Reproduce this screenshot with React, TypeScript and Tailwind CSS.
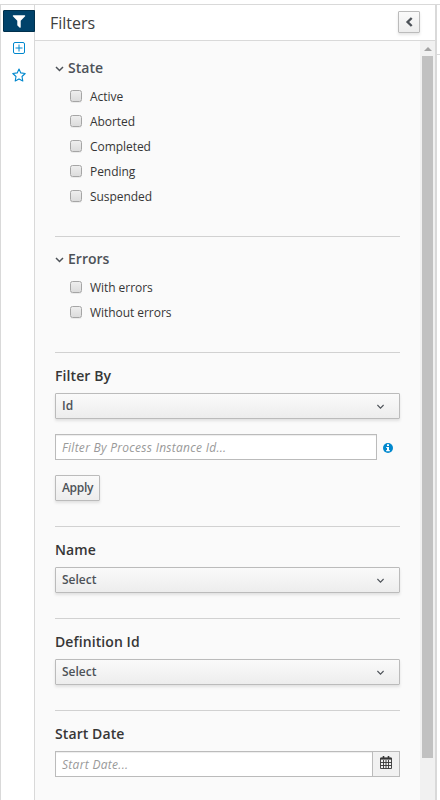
import React from "react";

const raised =
  "border border-[#bbb] rounded-[1px] bg-gradient-to-b from-[#fafafa] to-[#ededed] shadow-[0_2px_3px_rgba(3,3,3,0.1)] text-[#4d5258] font-semibold";

function Chevron() {
  return (
    <svg width="9" height="6" viewBox="0 0 9 6" fill="none" stroke="currentColor" strokeWidth="1.5">
      <path d="M1 1l3.500 3.500L8 1" />
    </svg>
  );
}

function Group({ title, items }: { title: string; items: string[] }) {
  return (
    <section>
      <h3 className="flex h-5 items-center text-sm font-semibold tracking-[0.02px] text-[#4d5258]">
        <span className="flex w-[13px] pt-px"><Chevron /></span>
        {title}
      </h3>
      <div className="pt-[6px] pl-[15px]">
        {items.map((item) => (
          <label key={item} className="flex h-[25px] items-center tracking-[-0.05px] text-[#363636]">
            <span className="mr-2 mb-[2px] h-3 w-3 rounded-[2.5px] border border-[#a5a5a5] bg-gradient-to-b from-[#eee] to-[#dcdcdc] shadow-[0_1px_0_rgba(0,0,0,0.06)]" />
            {item}
          </label>
        ))}
      </div>
    </section>
  );
}

function Label({ children }: { children: React.ReactNode }) {
  return <h3 className="h-5 text-sm leading-5 font-semibold tracking-[0.09px] text-[#363636]">{children}</h3>;
}

function Picker({ value }: { value: string }) {
  return (
    <button className={`mt-[7px] flex h-[26px] w-full items-center justify-between pr-[14px] pl-[6px] ${raised}`}>
      <span className="-mt-px">{value}</span>
      <svg className="mt-[2px]" width="9" height="6" viewBox="0 0 9 6" fill="none" stroke="currentColor" strokeWidth="1.1">
        <path d="M1.400 1l3.100 3.100L7.600 1" />
      </svg>
    </button>
  );
}

function Divider() {
  return <div className="h-px bg-[#d1d1d1]" />;
}

export default function App() {
  return (
    <div className="flex h-[800px] w-[440px] flex-col overflow-hidden bg-white pt-1 font-['Open_Sans','Noto_Sans',sans-serif] text-xs">
      <div className="flex min-h-0 flex-1 border-t border-[#d9d9d9]">
        <nav className="flex w-[35px] flex-col border-x border-[#d9d9d9]">
          <div className="mt-[5px] -mr-px ml-[2px] flex h-[22px] w-8 items-center justify-center rounded-l-[1px] border border-[#00304c] bg-[#00426a] text-white">
            <svg className="mr-px" width="16" height="16" viewBox="0 0 1792 1792" fill="currentColor">
              <path d="M1595 295q17 41-14 70l-493 493v742q0 42-39 59-13 5-25 5-27 0-45-19l-256-256q-19-19-19-45v-486l-493-493q-31-29-14-70 17-39 59-39h1280q42 0 59 39z" />
            </svg>
          </div>
          <svg className="mt-[10px] ml-[12px]" width="12" height="12" viewBox="0 0 12 12" fill="none" stroke="#0088ce">
            <rect x=".5" y=".5" width="11" height="11" rx="1.5" />
            <path d="M6 2.500v7M2.500 6h7" />
          </svg>
          <svg className="mt-[14px] ml-[11px]" width="14" height="14" viewBox="0 0 14 14" fill="none" stroke="#0088ce" strokeWidth="1.1" strokeLinejoin="round">
            <path d="M7 1l1.800 3.900 4.400.6-3.200 3 .8 4.500L7 10.900 3.200 13 4 8.500.8 5.500l4.400-.6z" />
          </svg>
        </nav>
        <main className="flex w-[400px] flex-col">
          <header className="flex h-9 items-center justify-between border-b border-[#d9d9d9] pr-[15px] pl-[15px]">
            <h2 className="text-base text-[#404040]">Filters</h2>
            <button className={`-mt-px flex h-[22px] w-[22px] items-center justify-center ${raised}`}>
              <svg className="mr-px" width="8" height="10" viewBox="0 0 8 10" fill="none" stroke="currentColor" strokeWidth="2.4">
                <path d="M6.700 1L2.600 5l4.100 4" />
              </svg>
            </button>
          </header>
          <div className="flex min-h-0 flex-1 bg-[#fafafa]">
            <div className="w-[385px] pt-[17px] pr-5 pl-5">
              <Group title="State" items={["Active", "Aborted", "Completed", "Pending", "Suspended"]} />
              <div className="h-[27px]" />
              <Divider />
              <div className="h-3" />
              <Group title="Errors" items={["With errors", "Without errors"]} />
              <div className="h-[27px]" />
              <Divider />
              <div className="h-[13px]" />
              <Label>Filter By</Label>
              <Picker value="Id" />
              <div className="mt-[15px] flex h-[26px] items-center">
                <div className="flex h-[26px] w-[322px] items-center border border-[#bbb] bg-white pt-[2px] pl-[6px] tracking-[0.28px] text-[#999] italic shadow-[inset_0_1px_1px_rgba(3,3,3,0.075)]">
                  Filter By Process Instance Id...
                </div>
                <svg className="mt-[2px] ml-[6px]" width="10" height="10" viewBox="0 0 10 10">
                  <circle cx="5" cy="5" r="5" fill="#0088ce" />
                  <path d="M4 1.300h2V3H4zM3.200 4H6v3h.8v1.300H3.200V7H4V5.100h-.8z" fill="white" />
                </svg>
              </div>
              <button className={`mt-[15px] flex h-[26px] w-[45px] items-center justify-center ${raised}`}>
                <span className="-mt-px tracking-[-0.3px]">Apply</span>
              </button>
              <div className="h-[25px]" />
              <Divider />
              <div className="h-[13px]" />
              <Label>Name</Label>
              <Picker value="Select" />
              <div className="h-[25px]" />
              <Divider />
              <div className="h-[13px]" />
              <Label>Definition Id</Label>
              <Picker value="Select" />
              <div className="h-[25px]" />
              <Divider />
              <div className="h-[13px]" />
              <Label>Start Date</Label>
              <div className="mt-[7px] flex h-[26px] border border-[#bbb] bg-white">
                <div className="flex flex-1 items-center pt-[2px] pl-[6px] tracking-[0.3px] text-[#999] italic shadow-[inset_0_1px_1px_rgba(3,3,3,0.075)]">Start Date...</div>
                <div className="flex w-[27px] items-center justify-center border-l border-[#bbb] bg-[#f1f1f1] pb-[3px]">
                  <svg width="12" height="13" viewBox="0 0 12 13" fill="none" stroke="#363636">
                    <path d="M.5 2.500h11" strokeWidth="2.200" />
                    <path d="M.5 2v10.500h11V2M.5 6.500h11M.5 9.500h11M3.500 4v8.500M6 4v8.500M8.500 4v8.500" strokeWidth=".9" />
                    <path d="M3.500 0v3M8.500 0v3" strokeWidth="1.600" />
                  </svg>
                </div>
              </div>
            </div>
            <div className="flex w-[15px] flex-col items-center bg-[#f1f1f1]">
              <svg className="mt-[6px] mb-[5px] shrink-0" width="8" height="4" viewBox="0 0 8 4"><path d="M0 4l4-4 4 4z" fill="#a3a3a3" /></svg>
              <div className="h-[702px] w-[11px] shrink-0 bg-[#c1c1c1]" />
            </div>
          </div>
        </main>
        <aside className="flex-1 border-l-2 border-[#d9d9d9]">
          <div className="h-[50px] border-b border-[#d9d9d9]" />
        </aside>
      </div>
    </div>
  );
}
